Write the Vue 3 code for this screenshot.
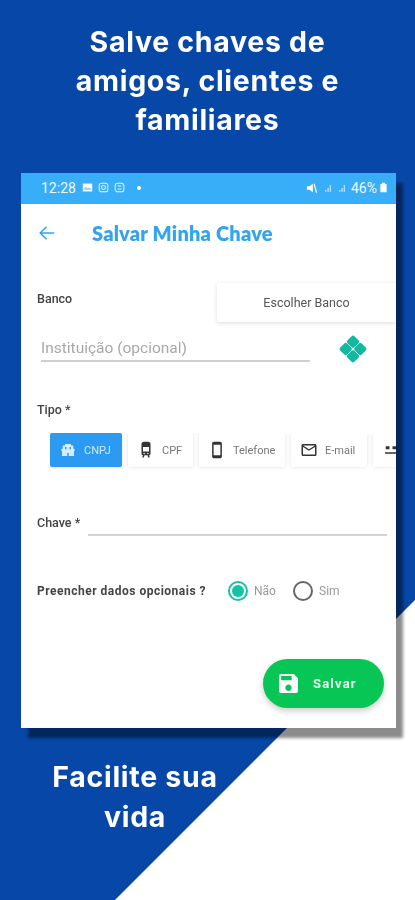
<script setup>
// tipos de chave
const tipos = [
  { nome: "CNPJ", largura: 72, ativo: true, icone: "M4 20v-7H3v-2l2-1V6h3V4h8v2h3v4l2 1v2h-1v7H4zm4-9h2V8H8v3zm6 0h2V8h-2v3zm-3 9h2v-4h-2v4z" },
  { nome: "CPF", largura: 65, icone: "M9 1h6c1.700 0 3 1.300 3 3v13c0 1.100-.9 2-2 2l1 3h-2l-1-3h-4l-1 3H7l1-3c-1.100 0-2-.9-2-2V4c0-1.700 1.300-3 3-3zM8 8v6h8V8H8zm1.500 9.500a1 1 0 1 0 0-2 1 1 0 0 0 0 2zm5 0a1 1 0 1 0 0-2 1 1 0 0 0 0 2z" },
  { nome: "Telefone", largura: 86, icone: "M8 1h8c1.400 0 2.500 1.100 2.500 2.500v17c0 1.400-1.100 2.500-2.500 2.500H8c-1.400 0-2.500-1.100-2.500-2.500v-17C5.500 2.100 6.600 1 8 1zm-.5 4v14h9V5h-9z" },
  { nome: "E-mail", largura: 76, icone: "M20 4H4C2.900 4 2 4.900 2 6v12c0 1.100.9 2 2 2h16c1.100 0 2-.9 2-2V6c0-1.100-.9-2-2-2zm0 14H4V8l8 5 8-5v10zm-8-7L4 6h16l-8 5z" },
];
</script>

<template>
  <div class="page">
    <h1 class="topo">Salve chaves de<br />amigos, clientes e<br />familiares</h1>

    <div class="celular">
      <div class="status">
        <span class="hora">12:28</span>
        <svg class="st" viewBox="0 0 14 14"><path fill="#fff" d="M1 2h12v10H1z" /><path fill="#38aef8" d="M2 9l3-3 2 2 2-1 3 2v1H2z" opacity=".6" /></svg>
        <svg class="st" viewBox="0 0 14 14" fill="none" stroke="#e3f3ff" stroke-width="1.300"><rect x="1.500" y="1.500" width="11" height="11" rx="3" /><circle cx="7" cy="7" r="2.500" /></svg>
        <svg class="st" viewBox="0 0 14 14" fill="none" stroke="#e3f3ff" stroke-width="1.300"><rect x="1.500" y="1.500" width="11" height="11" rx="3" /><path d="M4.500 5h5M4.500 9h5" /></svg>
        <span class="ponto"></span>
        <span class="esp"></span>
        <svg class="mudo" viewBox="0 0 14 14"><path fill="#fff" d="M1 5h3l4-3v10L4 9H1zM10 1.500l3 11h-1.500L9 3z" /></svg>
        <svg class="sinal" viewBox="0 0 12 12"><path fill="#cfeaff" d="M9 2h1.500v9H9zM6 6h1.500v5H6zM3 8.500h1.500V11H3z" /></svg>
        <svg class="sinal" viewBox="0 0 12 12"><path fill="#cfeaff" d="M9 2h1.500v9H9zM6 6h1.500v5H6zM3 8.500h1.500V11H3z" /></svg>
        <span class="bateria">46%</span>
        <svg class="bat" viewBox="0 0 10 14"><path fill="#fff" d="M3 1h4v1.500h2V13H1V2.500h2z" /></svg>
      </div>

      <div class="barra">
        <svg class="voltar" viewBox="0 0 20 20" fill="none" stroke="#35a4ee" stroke-width="1.700"><path d="M18 10H2.500M9.500 3l-7 7 7 7" /></svg>
        <span class="titulo">Salvar Minha Chave</span>
      </div>

      <div class="linha-banco">
        <span class="rotulo">Banco</span>
        <button class="escolher">Escolher Banco</button>
      </div>

      <div class="linha-inst">
        <div class="campo-inst">Instituição (opcional)</div>
        <svg class="logo" viewBox="0 0 28 28">
          <g fill="#10b9a0" transform="rotate(45 14 14)">
            <rect x="4" y="4" width="9.700" height="9.700" rx="2" />
            <rect x="14.300" y="4" width="9.700" height="9.700" rx="2" />
            <rect x="4" y="14.300" width="9.700" height="9.700" rx="2" />
            <rect x="14.300" y="14.300" width="9.700" height="9.700" rx="2" />
          </g>
        </svg>
      </div>

      <div class="rotulo tipo">Tipo *</div>
      <div class="chips">
        <div
          v-for="t in tipos"
          :key="t.nome"
          class="chip"
          :class="{ ativo: t.ativo }"
          :style="{ width: t.largura + 'px' }"
        >
          <svg class="chip-ic" viewBox="0 0 24 24"><path fill-rule="evenodd" :d="t.icone" /></svg>
          <span>{{ t.nome }}</span>
        </div>
        <div class="chip resto">
          <svg class="chip-ic" viewBox="0 0 24 24"><path d="M5 7h5v4H5zM14 7h5v4h-5zM4 15h16v2H4z" /></svg>
        </div>
      </div>

      <div class="linha-chave">
        <span class="rotulo">Chave *</span>
        <div class="campo-chave"></div>
      </div>

      <div class="linha-radio">
        <span class="rotulo forte">Preencher dados opcionais ?</span>
        <span class="radio marcado"><i></i></span>
        <span class="op">Não</span>
        <span class="radio"></span>
        <span class="op">Sim</span>
      </div>

      <button class="salvar">
        <svg class="disco" viewBox="3 3 18 18"><path fill="#fff" d="M17 3H5c-1.110 0-2 .9-2 2v14c0 1.100.89 2 2 2h14c1.100 0 2-.9 2-2V7l-4-4zm-5 16c-1.660 0-3-1.340-3-3s1.340-3 3-3 3 1.340 3 3-1.340 3-3 3zm3-10H5V5h10v4z" /></svg>
        <span>Salvar</span>
      </button>
    </div>

    <h2 class="baixo">Facilite sua<br />vida</h2>
  </div>
</template>

<style scoped>
.page {
  width: 415px;
  height: 900px;
  overflow: hidden;
  box-sizing: border-box;
  padding-top: 22px;
  display: flex;
  flex-direction: column;
  /* fundo azul com a diagonal branca */
  background: linear-gradient(135deg, #0647a8 717.4px, #fff 718px);
  font-family: Roboto, "Liberation Sans", sans-serif;
}
.topo {
  margin: 0;
  text-align: center;
  font-family: Inter, "Liberation Sans", sans-serif;
  font-size: 28.500px;
  line-height: 39px;
  font-weight: 700;
  letter-spacing: 0.7px;
  color: #fff;
  filter: blur(0.3px);
}
.celular {
  margin: 34px 0 0 21px;
  width: 375px;
  height: 555px;
  flex: none;
  background: #fff;
  box-shadow: 7px 10px 3px rgba(0, 0, 0, 0.45);
  display: flex;
  flex-direction: column;
  filter: blur(0.4px);
}
.status {
  height: 31px;
  flex: none;
  background: #38aef8;
  display: flex;
  align-items: center;
  padding: 0 8px 2px 20px;
  box-sizing: border-box;
  gap: 5px;
  color: #eef8ff;
}
.hora {
  font-size: 14px;
  margin-right: 1px;
}
.st {
  width: 11px;
  height: 11px;
}
.ponto {
  width: 4px;
  height: 4px;
  border-radius: 50%;
  background: #fff;
  margin-left: 7px;
}
.esp {
  flex: 1;
}
.mudo {
  width: 12px;
  height: 12px;
}
.sinal {
  width: 9px;
  height: 10px;
}
.bateria {
  font-size: 14px;
  margin-left: 0;
  margin-right: -3px;
}
.bat {
  width: 9px;
  height: 11px;
}
.barra {
  height: 58px;
  flex: none;
  display: flex;
  align-items: center;
  padding-left: 17px;
}
.voltar {
  width: 18px;
  height: 18px;
}
.titulo {
  margin-left: 36px;
  font-size: 20px;
  font-weight: 800;
  color: #35a4ee;
  font-family: Lato, Roboto, sans-serif;
  letter-spacing: 0.2px;
}
.rotulo {
  font-size: 12.500px;
  color: #444;
  font-weight: 500;
}
.linha-banco {
  display: flex;
  justify-content: space-between;
  padding-left: 16px;
  margin-top: 21px;
  height: 39px;
}
.linha-banco .rotulo {
  margin-top: 8px;
}
.escolher {
  width: 179px;
  height: 39px;
  border: none;
  border-radius: 3px 0 0 3px;
  background: #fff;
  box-shadow: 0 1px 4px rgba(0, 0, 0, 0.14);
  font-family: inherit;
  font-size: 12.500px;
  color: #555;
}
.linha-inst {
  display: flex;
  align-items: flex-start;
  margin-top: 16px;
  padding-left: 20px;
}
.campo-inst {
  width: 269px;
  height: 22px;
  border-bottom: 2px solid #cfcfcf;
  font-size: 15.500px;
  line-height: 20px;
  color: #a8a8a8;
}
.logo {
  width: 28px;
  height: 28px;
  margin-left: 29px;
  margin-top: -3px;
}
.tipo {
  margin: 40px 0 0 16px;
  line-height: 14px;
}
.chips {
  display: flex;
  gap: 6px;
  margin: 16px 0 0 29px;
  overflow: hidden;
  flex: none;
  height: 38px;
  padding-bottom: 4px;
  box-sizing: border-box;
}
.chip {
  height: 34px;
  flex: none;
  background: #fff;
  border-radius: 2px;
  box-shadow: 0 0 4px rgba(0, 0, 0, 0.12);
  display: flex;
  align-items: center;
  padding-left: 9px;
  box-sizing: border-box;
  gap: 7px;
  font-size: 11px;
  color: #777;
}
.chip-ic {
  width: 18px;
  height: 18px;
  fill: #333;
}
.chip.ativo {
  background: #2b9af0;
  color: #cfe8ff;
}
.chip.ativo .chip-ic {
  fill: #d6ecff;
}
.resto {
  width: 30px;
}
.linha-chave {
  display: flex;
  align-items: flex-start;
  margin: 45px 0 0 16px;
}
.linha-chave .rotulo {
  line-height: 14px;
}
.campo-chave {
  width: 299px;
  height: 18px;
  margin-left: 8px;
  border-bottom: 2px solid #d4d4d4;
}
.linha-radio {
  display: flex;
  align-items: center;
  margin: 44px 0 0 16px;
  height: 22px;
}
.forte {
  font-weight: 700;
  font-size: 12px;
  letter-spacing: 0.5px;
  width: 191px;
  flex: none;
  color: #444;
  white-space: nowrap;
}
.radio {
  width: 20px;
  height: 20px;
  box-sizing: border-box;
  border: 2px solid #666;
  border-radius: 50%;
  display: flex;
  align-items: center;
  justify-content: center;
  flex: none;
}
.radio.marcado {
  border-color: #10c4a6;
}
.radio.marcado i {
  width: 12px;
  height: 12px;
  border-radius: 50%;
  background: #10c4a6;
}
.op {
  font-size: 12px;
  color: #999;
  margin-left: 6px;
  width: 39px;
}
.salvar {
  align-self: flex-end;
  margin: 57px 12px 0 0;
  width: 121px;
  height: 49px;
  flex: none;
  border: none;
  border-radius: 25px;
  background: #07c655;
  box-shadow: 0 3px 6px rgba(0, 0, 0, 0.2);
  display: flex;
  align-items: center;
  padding-left: 16px;
  gap: 15px;
  color: #e8fff0;
  font-family: inherit;
  font-size: 13px;
  font-weight: 700;
  letter-spacing: 1.200px;
}
.disco {
  width: 19px;
  height: 19px;
}
.baixo {
  margin: 29px 0 0 0;
  width: 270px;
  text-align: center;
  font-family: Inter, "Liberation Sans", sans-serif;
  font-size: 28.500px;
  line-height: 40px;
  font-weight: 700;
  letter-spacing: 0.7px;
  color: #fff;
  filter: blur(0.3px);
}
</style>
